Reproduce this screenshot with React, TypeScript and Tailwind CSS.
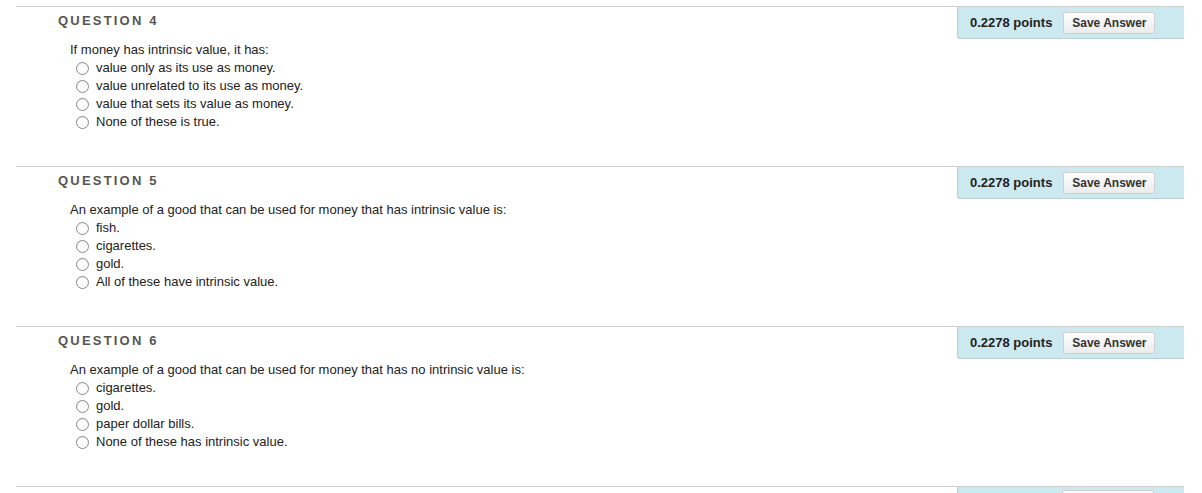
import React from 'react';

type Question = {
  num: number;
  prompt: string;
  options: string[];
};

const questions: Question[] = [
  {
    num: 4,
    prompt: 'If money has intrinsic value, it has:',
    options: [
      'value only as its use as money.',
      'value unrelated to its use as money.',
      'value that sets its value as money.',
      'None of these is true.',
    ],
  },
  {
    num: 5,
    prompt: 'An example of a good that can be used for money that has intrinsic value is:',
    options: ['fish.', 'cigarettes.', 'gold.', 'All of these have intrinsic value.'],
  },
  {
    num: 6,
    prompt: 'An example of a good that can be used for money that has no intrinsic value is:',
    options: ['cigarettes.', 'gold.', 'paper dollar bills.', 'None of these has intrinsic value.'],
  },
];

function Radio() {
  return (
    <span className="w-[13px] h-[13px] rounded-full border border-[#8a8a8a] bg-white shrink-0 shadow-[inset_0_1px_1px_rgba(0,0,0,0.08)]" />
  );
}

function PointsBox() {
  return (
    <div className="w-[227px] h-[32px] bg-[#cbe9ef] border-l border-b border-[#b9cfd4] rounded-bl-[3px] flex items-center pl-[12px] gap-[11px] shrink-0">
      <span className="text-[13px] font-bold text-[#222]">0.2278 points</span>
      <button className="w-[92px] h-[22px] rounded-[2px] border border-[#cfcfcf] bg-gradient-to-b from-[#fdfdfd] to-[#ececec] text-[12px] font-bold text-[#333]">
        Save Answer
      </button>
    </div>
  );
}

function QuestionBlock({ q }: { q: Question }) {
  return (
    <section className="h-[160px] border-t border-[#cfcfcf] flex justify-between">
      <div className="pl-[42px]">
        <h3 className="mt-[6px] text-[13px] leading-[16px] font-bold tracking-[2.2px] text-[#555]">
          QUESTION {q.num}
        </h3>
        <div className="pl-[12px] mt-[12px] text-[13px] leading-[18px] text-[#222]">
          <p>{q.prompt}</p>
          <ul>
            {q.options.map((opt) => (
              <li key={opt} className="flex items-center gap-[7px] pl-[6px] h-[18px]">
                <Radio />
                <span>{opt}</span>
              </li>
            ))}
          </ul>
        </div>
      </div>
      <PointsBox />
    </section>
  );
}

export default function App() {
  return (
    <div className="w-[1202px] h-[493px] bg-white overflow-hidden pt-[6px] font-['Liberation_Sans',Arial,sans-serif]">
      <div className="ml-[16px] w-[1168px]">
        {questions.map((q) => (
          <QuestionBlock key={q.num} q={q} />
        ))}
        <section className="h-[160px] border-t border-[#cfcfcf] flex justify-end">
          <div className="w-[227px] h-[32px] bg-[#cbe9ef] border-l border-[#b9cfd4] pl-[104px] pt-[3px]">
            <div className="w-[92px] h-[22px] rounded-[2px] border border-[#cfcfcf] bg-[#fdfdfd]" />
          </div>
        </section>
      </div>
    </div>
  );
}
